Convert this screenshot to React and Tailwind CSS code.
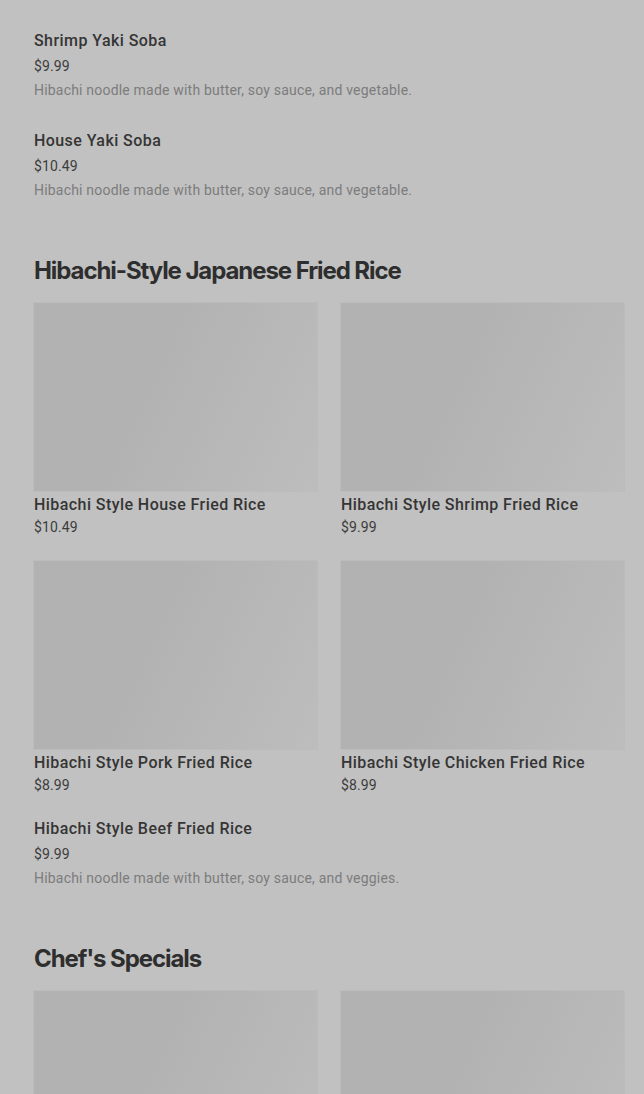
const sections = [
  {
    items: [
      { name: 'Chicken Yaki Soba', price: '$9.49', desc: 'Hibachi noodle made with butter, soy sauce, and vegetable.' },
      { name: 'Shrimp Yaki Soba', price: '$9.99', desc: 'Hibachi noodle made with butter, soy sauce, and vegetable.' },
      { name: 'House Yaki Soba', price: '$10.49', desc: 'Hibachi noodle made with butter, soy sauce, and vegetable.' },
    ],
  },
  {
    title: 'Hibachi-Style Japanese Fried Rice',
    cards: [
      { name: 'Hibachi Style House Fried Rice', price: '$10.49' },
      { name: 'Hibachi Style Shrimp Fried Rice', price: '$9.99' },
      { name: 'Hibachi Style Pork Fried Rice', price: '$8.99' },
      { name: 'Hibachi Style Chicken Fried Rice', price: '$8.99' },
    ],
    items: [
      { name: 'Hibachi Style Beef Fried Rice', price: '$9.99', desc: 'Hibachi noodle made with butter, soy sauce, and veggies.' },
    ],
  },
  {
    title: "Chef's Specials",
    cards: [
      { name: 'Hibachi Steak & Shrimp', price: '$15.99' },
      { name: 'Hibachi Chicken & Shrimp', price: '$14.49' },
    ],
  },
];

const ListItem = ({ name, price, desc }) => (
  <div className="flex flex-col pt-px">
    <h4 className="text-[16px] leading-6 font-medium tracking-[0.027em] text-[#353535]">{name}</h4>
    <p className="mt-[3px] text-[14px] leading-5 tracking-[0.01em] text-[#3c3c3c]">{price}</p>
    <p className="mt-1 text-[14px] leading-5 tracking-[0.014em] text-[#7c7c7c]">{desc}</p>
  </div>
);

const Card = ({ name, price }) => (
  <div className="flex flex-col">
    <div className="h-[188px] w-full bg-linear-115 from-[#b2b2b2] from-40% to-[#bdbdbd] shadow-[0_0_0_1px_#bcbcbc]" />
    <h4 className="mt-[2px] text-[16px] leading-6 font-medium tracking-[0.027em] text-[#353535]">{name}</h4>
    <p className="text-[14px] leading-5 tracking-[0.01em] text-[#3c3c3c]">{price}</p>
  </div>
);

export default function App() {
  return (
    <div
      className="h-[1094px] overflow-hidden bg-[#c1c1c1] pl-[34px] pr-[20px]"
      style={{ fontFamily: 'Roboto, "Liberation Sans", sans-serif' }}
    >
      <div className="-mt-[72px] flex flex-col">
        {sections.map((section, si) => (
          <section key={si} className={si > 0 ? 'mt-[55px]' : ''}>
            {section.title && (
              <h2
                className="text-[24px] leading-8 font-bold tracking-[-0.045em] text-[#2e2e2e]"
                style={{ fontFamily: 'Inter, "Liberation Sans", sans-serif' }}
              >
                {section.title}
              </h2>
            )}
            {section.cards && (
              <div className="mt-4 grid grid-cols-2 gap-x-6 gap-y-6">
                {section.cards.map((c) => (
                  <Card key={c.name} {...c} />
                ))}
              </div>
            )}
            {section.items && (
              <div className={`flex flex-col gap-[28px] ${section.cards ? 'mt-[21px]' : ''}`}>
                {section.items.map((it) => (
                  <ListItem key={it.name} {...it} />
                ))}
              </div>
            )}
          </section>
        ))}
      </div>
    </div>
  );
}
